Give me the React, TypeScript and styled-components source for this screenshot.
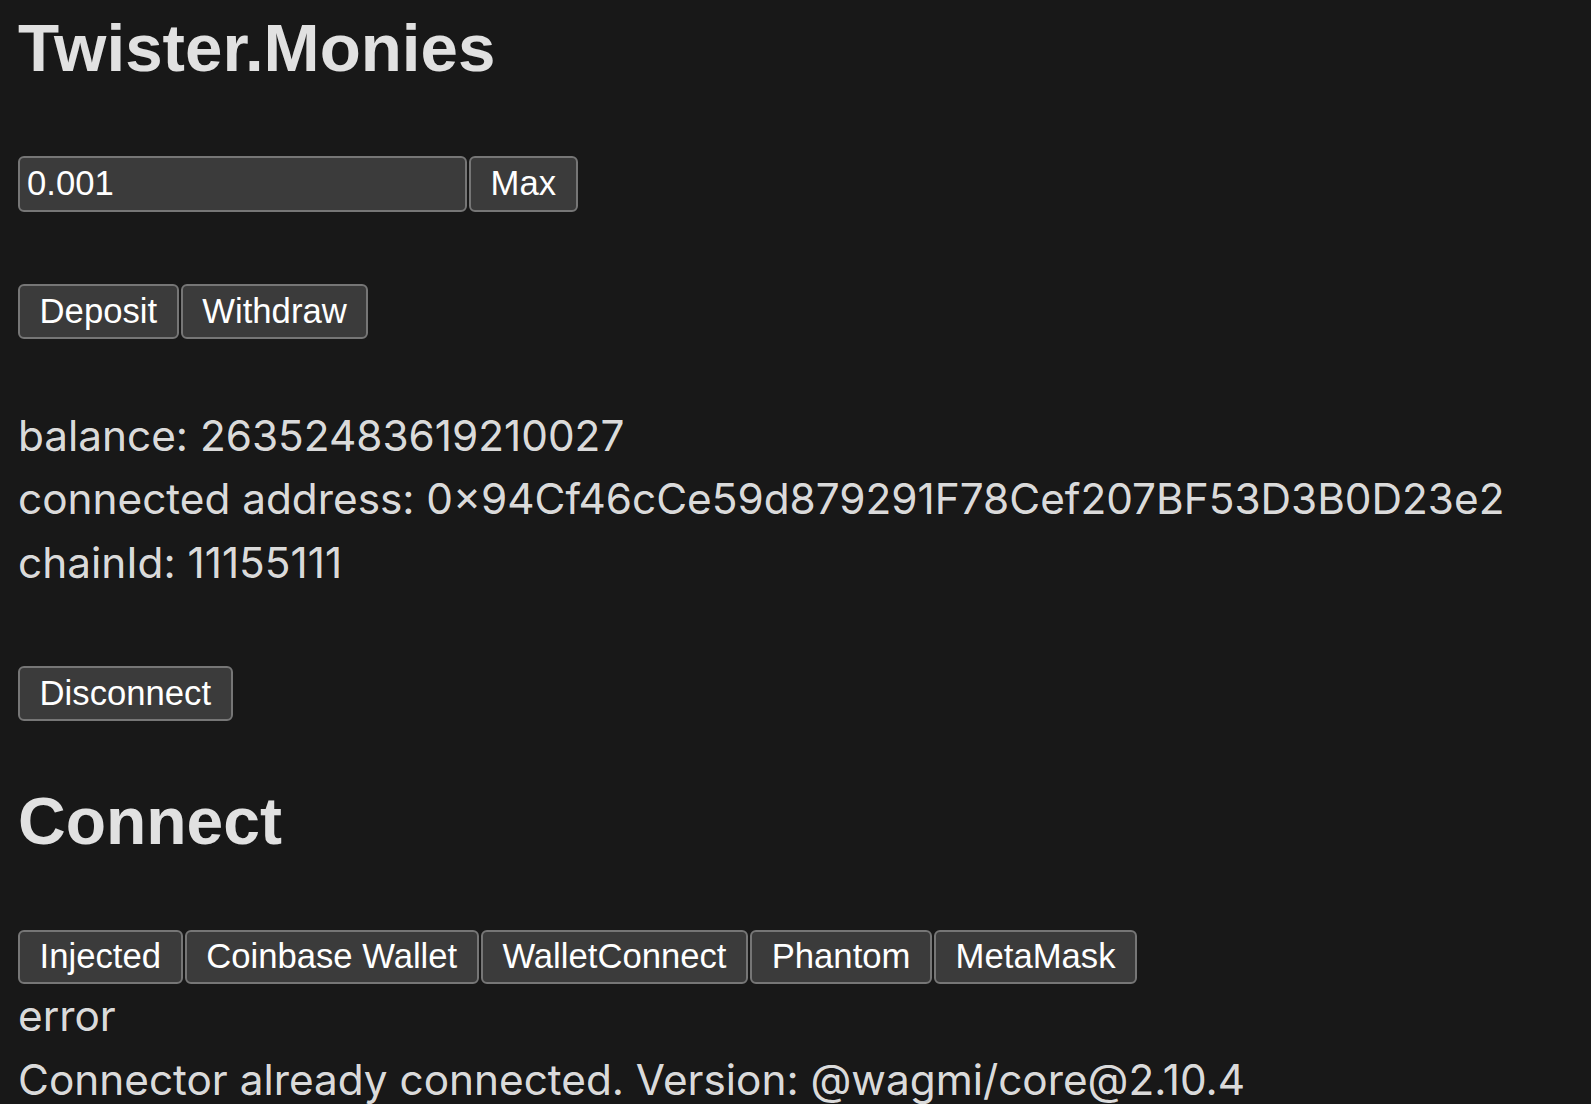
import React from "react";
import styled, { createGlobalStyle } from "styled-components";

const GlobalStyle = createGlobalStyle`
  html, body {
    margin: 0;
    padding: 0;
    background-color: #181818;
  }
  body {
    color: rgba(255, 255, 255, 0.87);
    font-family: Inter, "Noto Sans", sans-serif;
    -webkit-font-smoothing: antialiased;
  }
`;

const Page = styled.div`
  display: flex;
  flex-direction: column;
  align-items: flex-start;
  padding: 8px 18px 0 18px;
  min-height: 1096px;
`;

const Heading = styled.h2<{ $top: number; $size: number }>`
  margin: ${(p) => p.$top}px 0 0 0;
  font-family: "Liberation Sans", Arial, sans-serif;
  font-weight: 700;
  font-size: ${(p) => p.$size}px;
  line-height: 80px;
  color: rgba(255, 255, 255, 0.87);
`;

const Row = styled.div<{ $top: number }>`
  display: flex;
  flex-direction: row;
  align-items: stretch;
  gap: 2px;
  margin-top: ${(p) => p.$top}px;
`;

const Button = styled.button`
  box-sizing: border-box;
  margin: 0;
  padding: 5.8px 19.6px;
  font-family: "Liberation Sans", Arial, sans-serif;
  font-size: 34.67px;
  line-height: normal;
  color: #ffffff;
  background-color: #3b3b3b;
  border: 2px solid #767676;
  border-radius: 6px;
  cursor: pointer;
  white-space: nowrap;
`;

const AmountInput = styled.input`
  box-sizing: border-box;
  width: 449px;
  height: 55.5px;
  margin: 0;
  padding: 0 7px;
  font-family: "Liberation Sans", Arial, sans-serif;
  font-size: 34.67px;
  color: #ffffff;
  background-color: #3b3b3b;
  border: 2px solid #767676;
  border-radius: 6px;
  outline: none;
`;

const Info = styled.div<{ $top: number }>`
  margin-top: ${(p) => p.$top}px;
  font-family: Inter, "Noto Sans", sans-serif;
  font-size: 42.3px;
  line-height: 63.5px;
  color: rgba(255, 255, 255, 0.87);
  white-space: nowrap;
`;

const Line = styled.div``;

const SoloButton = styled(Button)<{ $top: number }>`
  margin-top: ${(p) => p.$top}px;
`;

const connectors = ["Injected", "Coinbase Wallet", "WalletConnect", "Phantom", "MetaMask"];

export default function App() {
  const [amount, setAmount] = React.useState("0.001");
  return (
    <>
      <GlobalStyle />
      <Page>
        <Heading $top={0} $size={67.3}>
          Twister.Monies
        </Heading>
        <Row $top={68}>
          <AmountInput value={amount} onChange={(e) => setAmount(e.target.value)} />
          <Button type="button">Max</Button>
        </Row>
        <Row $top={72.5}>
          <Button type="button">Deposit</Button>
          <Button type="button">Withdraw</Button>
        </Row>
        <Info $top={65}>
          <Line>balance: 26352483619210027</Line>
          <Line>connected address: 0×94Cf46cCe59d879291F78Cef207BF53D3B0D23e2</Line>
          <Line>chainId: 11155111</Line>
        </Info>
        <SoloButton type="button" $top={72}>
          Disconnect
        </SoloButton>
        <Heading $top={60} $size={66}>
          Connect
        </Heading>
        <Row $top={69}>
          {connectors.map((c) => (
            <Button key={c} type="button">
              {c}
            </Button>
          ))}
        </Row>
        <Info $top={0}>
          <Line>error</Line>
          <Line>Connector already connected. Version: @wagmi/core@2.10.4</Line>
        </Info>
      </Page>
    </>
  );
}
